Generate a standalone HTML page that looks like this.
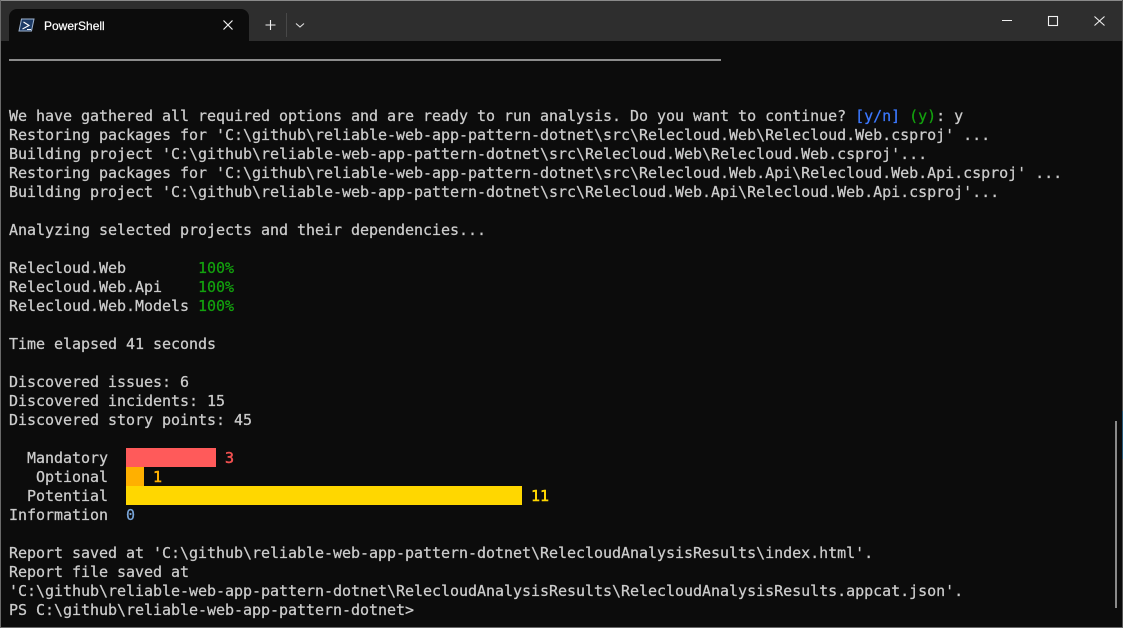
<!DOCTYPE html>
<html><head><meta charset="utf-8"><style>
html,body{margin:0;padding:0;background:#0c0c0c;width:1123px;height:628px;overflow:hidden}
#w{position:relative;width:1123px;height:628px;background:#0c0c0c;overflow:hidden}
#tb{position:absolute;left:0;top:0;width:1123px;height:41px;background:#2e2e2e}
#tab{position:absolute;left:9px;top:9px;width:240px;height:32px;background:#0c0c0c;border-radius:8px 8px 0 0}
#ttl{position:absolute;left:44px;top:18px;font:12px/16px "Liberation Sans",sans-serif;color:#fff;-webkit-text-stroke:.2px #fff}
.ln{position:absolute;left:9px;height:19px;margin-top:1px;font:15px/19px "DejaVu Sans Mono","Liberation Mono",monospace;letter-spacing:-.03px;color:#cccccc;white-space:pre;-webkit-text-stroke:.25px currentColor}
.bar{position:absolute;left:126px;height:19px}
svg{position:absolute;left:0;top:0}
</style></head><body><div id="w">
<div id="tb"></div><div id="tab"></div>
<div id="ttl">PowerShell</div>
<svg width="1123" height="41" fill="none">
<path d="M21.5 19H34L31.5 31H19Z" fill="#1d3b66" stroke="#9fb4d0" stroke-width="1"/>
<path d="M23.5 22L29 25.5L22.5 29M27 29.5H31" stroke="#fff" stroke-width="1.1"/>
<path d="M223.5 20.5L232.5 29.5M232.5 20.5L223.5 29.5" stroke="#f0f0f0" stroke-width="1.2"/>
<path d="M270.5 20V30M265.5 25H275.5" stroke="#f0f0f0" stroke-width="1.1"/>
<rect x="286" y="13" width="1" height="24" fill="#484848"/>
<path d="M296 23.5L300 27L304 23.5" stroke="#e0e0e0" stroke-width="1.1"/>
<rect x="1002" y="20" width="10" height="1" fill="#f0f0f0"/>
<rect x="1048.5" y="16.5" width="9" height="9" stroke="#f0f0f0" stroke-width="1.1"/>
<path d="M1094.5 16.5L1104.5 25.5M1104.5 16.5L1094.5 25.5" stroke="#f0f0f0" stroke-width="1.1"/>
</svg>
<div style="position:absolute;left:0;top:0;width:1123px;height:1px;background:#8a8a8a"></div>
<div style="position:absolute;left:0;top:0;width:1px;height:628px;background:#6a6a6a"></div>
<div style="position:absolute;right:0;top:0;width:1px;height:628px;background:#555"></div>
<div style="position:absolute;left:0;top:627px;width:1123px;height:1px;background:#6a6a6a"></div>
<div style="position:absolute;left:9px;top:59px;width:712px;height:2px;background:#8c8c8c"></div>
<div class="ln" style="top:106px">We have gathered all required options and are ready to run analysis. Do you want to continue? <span style="color:#3b78ff">[y/n]</span> <span style="color:#13a10e">(y)</span>: y</div>
<div class="ln" style="top:125px">Restoring packages for 'C:\github\reliable-web-app-pattern-dotnet\src\Relecloud.Web\Relecloud.Web.csproj' ...</div>
<div class="ln" style="top:144px">Building project 'C:\github\reliable-web-app-pattern-dotnet\src\Relecloud.Web\Relecloud.Web.csproj'...</div>
<div class="ln" style="top:163px">Restoring packages for 'C:\github\reliable-web-app-pattern-dotnet\src\Relecloud.Web.Api\Relecloud.Web.Api.csproj' ...</div>
<div class="ln" style="top:182px">Building project 'C:\github\reliable-web-app-pattern-dotnet\src\Relecloud.Web.Api\Relecloud.Web.Api.csproj'...</div>
<div class="ln" style="top:220px">Analyzing selected projects and their dependencies...</div>
<div class="ln" style="top:258px">Relecloud.Web        <span style="color:#13a10e">100%</span></div>
<div class="ln" style="top:277px">Relecloud.Web.Api    <span style="color:#13a10e">100%</span></div>
<div class="ln" style="top:296px">Relecloud.Web.Models <span style="color:#13a10e">100%</span></div>
<div class="ln" style="top:334px">Time elapsed 41 seconds</div>
<div class="ln" style="top:372px">Discovered issues: 6</div>
<div class="ln" style="top:391px">Discovered incidents: 15</div>
<div class="ln" style="top:410px">Discovered story points: 45</div>
<div class="bar" style="top:448px;width:90px;background:#ff5a5a"></div>
<div class="bar" style="top:467px;width:18px;background:#ffb000"></div>
<div class="bar" style="top:486px;width:396px;background:#ffd700"></div>
<div class="ln" style="top:448px">  Mandatory</div><div class="ln" style="top:448px;left:225px;color:#f05050;-webkit-text-stroke-width:.5px">3</div>
<div class="ln" style="top:467px">   Optional</div><div class="ln" style="top:467px;left:153px;color:#ffb000;-webkit-text-stroke-width:.5px">1</div>
<div class="ln" style="top:486px">  Potential</div><div class="ln" style="top:486px;left:531px;color:#ffd700;-webkit-text-stroke-width:.5px">11</div>
<div class="ln" style="top:505px">Information  <span style="color:#7aa6da">0</span></div>
<div class="ln" style="top:543px">Report saved at 'C:\github\reliable-web-app-pattern-dotnet\RelecloudAnalysisResults\index.html'.</div>
<div class="ln" style="top:562px">Report file saved at</div>
<div class="ln" style="top:581px">'C:\github\reliable-web-app-pattern-dotnet\RelecloudAnalysisResults\RelecloudAnalysisResults.appcat.json'.</div>
<div class="ln" style="top:600px">PS C:\github\reliable-web-app-pattern-dotnet&gt;</div>
<div style="position:absolute;left:1115px;top:421px;width:2px;height:187px;background:#8a8a8a"></div>
<div style="position:absolute;left:1122px;top:411px;width:1px;height:48px;background:#2a5a78"></div>
</div></body></html>
